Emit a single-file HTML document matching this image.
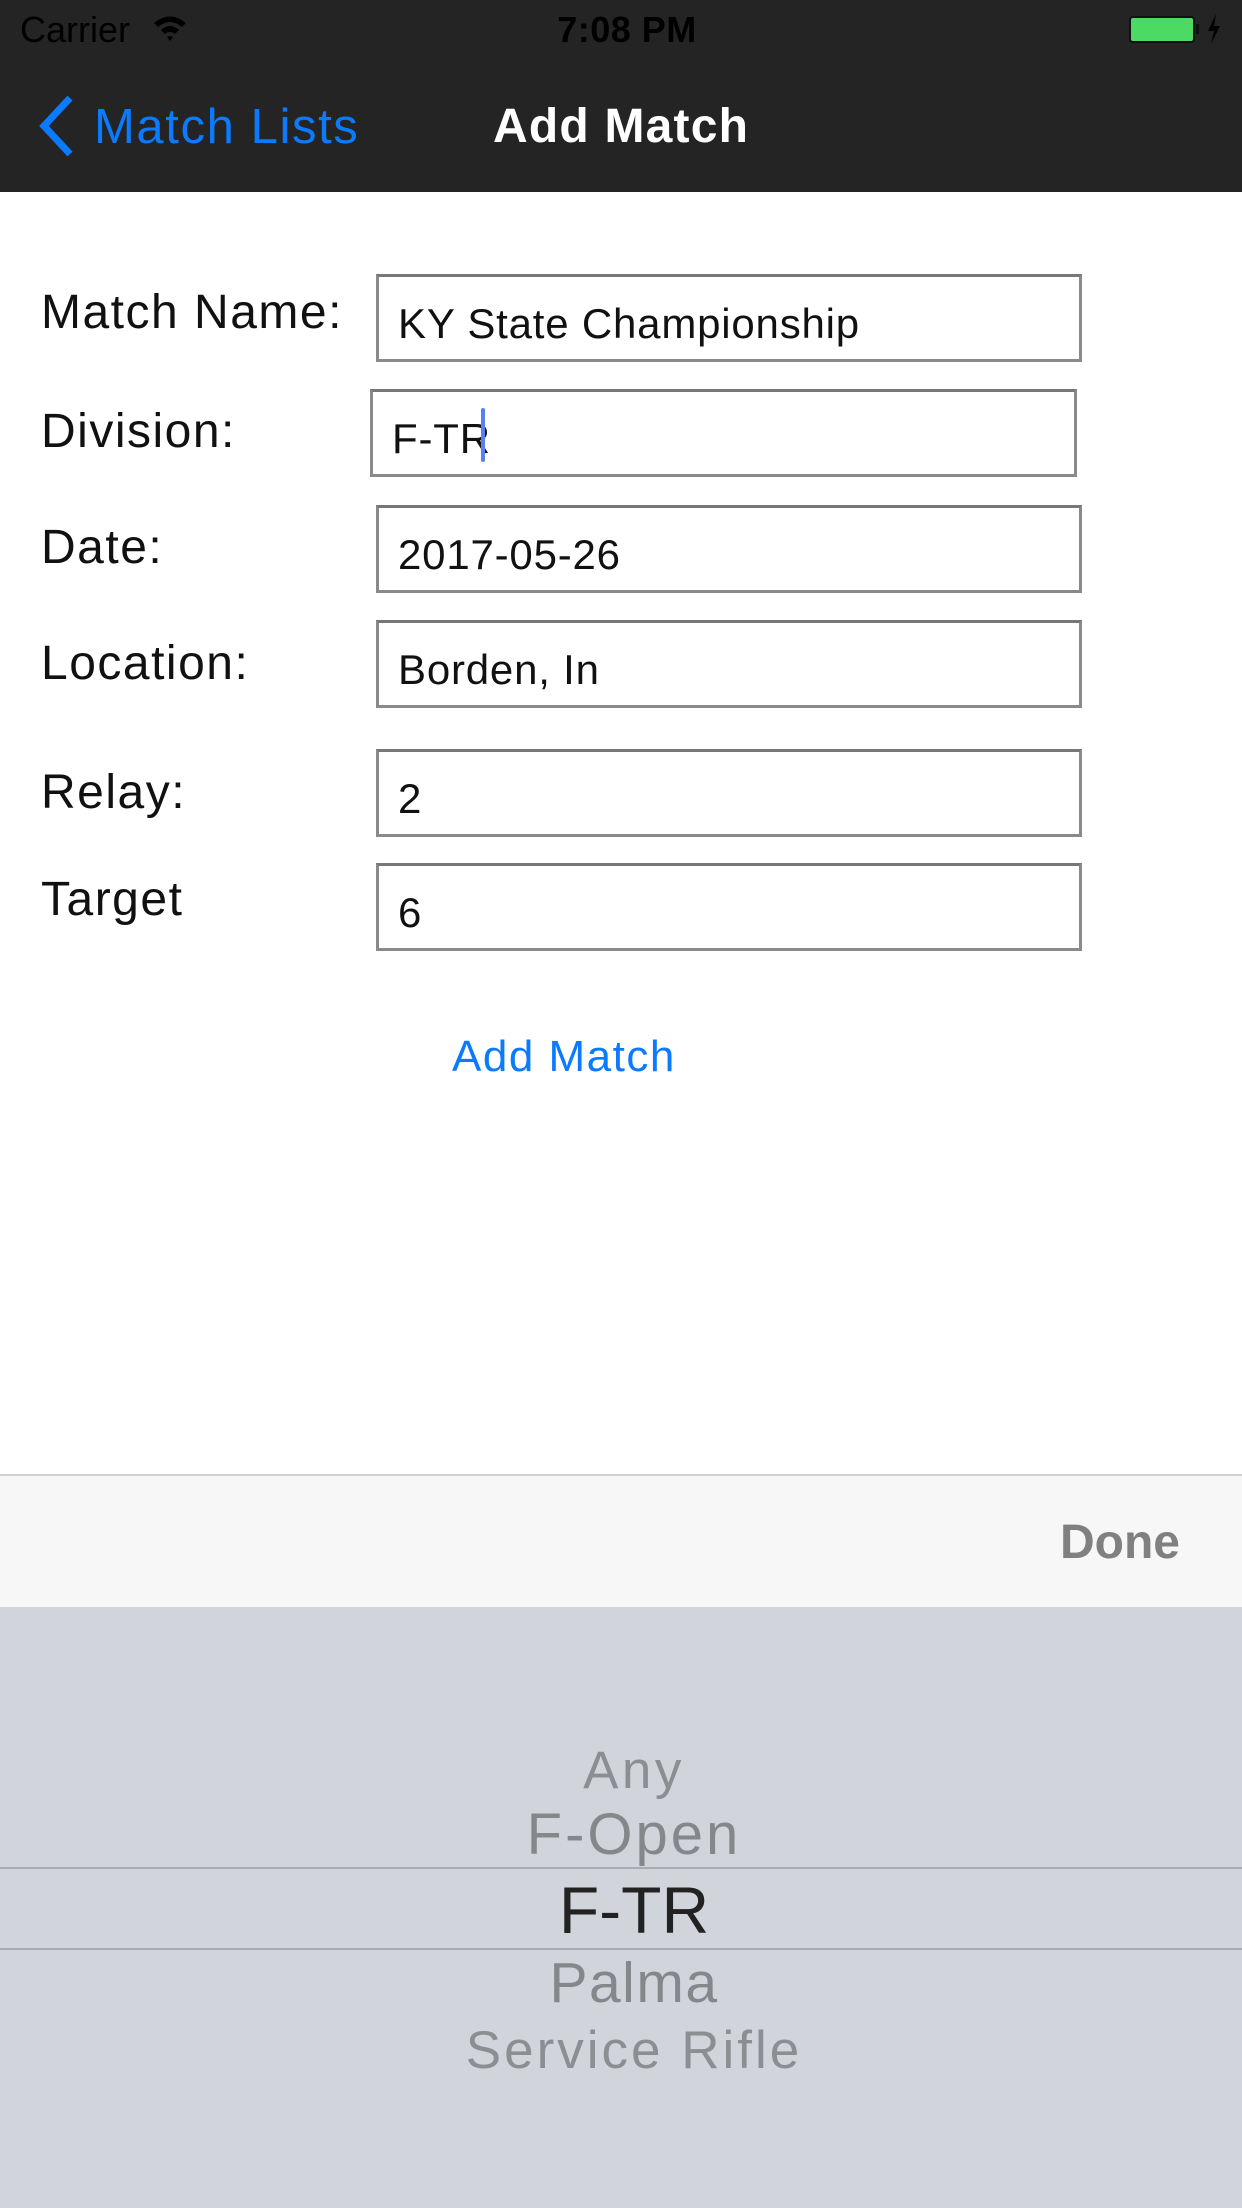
<!DOCTYPE html>
<html><head><meta charset="utf-8"><style>
*{margin:0;padding:0;box-sizing:border-box}
body{width:1242px;height:2208px;position:relative;background:#fff;font-family:"Liberation Sans",sans-serif;overflow:hidden}
.a{position:absolute;white-space:nowrap}
.top{position:absolute;left:0;top:0;width:1242px;height:192px;background:#242424}
.lbl{position:absolute;left:41px;font-size:48px;color:#111;line-height:1;letter-spacing:1.5px}
.f{position:absolute;border:3px solid #8a8a8a;border-top-color:#777;background:#fff}
.f span{position:absolute;left:19px;font-size:42px;color:#111;line-height:1;letter-spacing:0.8px}
.p{position:absolute;left:0;width:1268px;text-align:center;white-space:nowrap;line-height:1}
</style></head><body>
<div class="top"></div>
<div class="a" style="left:20px;top:9px;font-size:36px;color:#000">Carrier</div>
<svg class="a" style="left:152px;top:14px" width="36" height="28" viewBox="0 0 36 28"><path d="M2 9 Q18 -4 34 9 L30 13 Q18 3 6 13Z M9 16 Q18 8 27 16 L23 20 Q18 16 13 20Z M15 23 L18 27 L21 23 Q18 21 15 23Z" fill="#000"/></svg>
<div class="a" style="left:0;width:1254px;text-align:center;top:9px;font-size:36px;color:#000;font-weight:bold;letter-spacing:0.5px">7:08 PM</div>
<div class="a" style="left:1129px;top:16px;width:66px;height:27px;border:2px solid #111;border-radius:4px;background:#4cd964"></div>
<div class="a" style="left:1196px;top:24px;width:3px;height:10px;background:#111"></div>
<svg class="a" style="left:1207px;top:14px" width="14" height="30" viewBox="0 0 14 30"><path d="M9 0 L1 17 L7 17 L4 30 L13 12 L7 12Z" fill="#000"/></svg>
<svg class="a" style="left:36px;top:94px" width="42" height="64" viewBox="0 0 42 64"><path d="M34 4 L8 32 L34 60" stroke="#0a7aff" stroke-width="7" fill="none"/></svg>
<div class="a" style="left:94px;top:99px;font-size:49px;color:#0a7aff;letter-spacing:1.6px">Match Lists</div>
<div class="a" style="left:493px;top:99px;font-size:48px;color:#fff;font-weight:bold;letter-spacing:1.2px">Add Match</div>

<div class="lbl" style="top:289px">Match Name:</div>
<div class="lbl" style="top:408px">Division:</div>
<div class="lbl" style="top:524px">Date:</div>
<div class="lbl" style="top:640px">Location:</div>
<div class="lbl" style="top:769px">Relay:</div>
<div class="lbl" style="top:876px">Target</div>

<div class="f" style="left:376px;top:274px;width:706px;height:88px"><span style="top:26px">KY State Championship</span></div>
<div class="f" style="left:370px;top:389px;width:707px;height:88px"><span style="top:26px;left:19px">F-TR</span><div class="a" style="left:108px;top:16px;width:4px;height:54px;background:#5a7ff0;border-radius:2px"></div></div>
<div class="f" style="left:376px;top:505px;width:706px;height:88px"><span style="top:26px">2017-05-26</span></div>
<div class="f" style="left:376px;top:620px;width:706px;height:88px"><span style="top:26px">Borden, In</span></div>
<div class="f" style="left:376px;top:749px;width:706px;height:88px"><span style="top:26px">2</span></div>
<div class="f" style="left:376px;top:863px;width:706px;height:88px"><span style="top:26px">6</span></div>

<div class="a" style="left:452px;top:1032px;font-size:44px;color:#0a7aff;letter-spacing:1.5px">Add Match</div>

<div class="a" style="left:0;top:1474px;width:1242px;height:133px;background:#f7f7f7;border-top:2px solid #d0d0d0"></div>
<div class="a" style="right:62px;top:1515px;font-size:48px;color:#808080;font-weight:bold">Done</div>

<div class="a" style="left:0;top:1607px;width:1242px;height:601px;background:#d1d5db"></div>
<div class="a" style="left:0;top:1867px;width:1242px;height:2px;background:#a8abb0"></div>
<div class="a" style="left:0;top:1948px;width:1242px;height:2px;background:#a8abb0"></div>
<div class="p" style="top:1744px;font-size:53px;color:#8c8e92;letter-spacing:3.5px">Any</div>
<div class="p" style="top:1806px;font-size:58px;color:#85878b;letter-spacing:3px">F-Open</div>
<div class="p" style="top:1877px;font-size:66px;color:#222">F-TR</div>
<div class="p" style="top:1955px;font-size:57px;color:#85878b;letter-spacing:1.5px">Palma</div>
<div class="p" style="top:2024px;font-size:53px;color:#8c8e92;letter-spacing:3px">Service Rifle</div>
</body></html>
